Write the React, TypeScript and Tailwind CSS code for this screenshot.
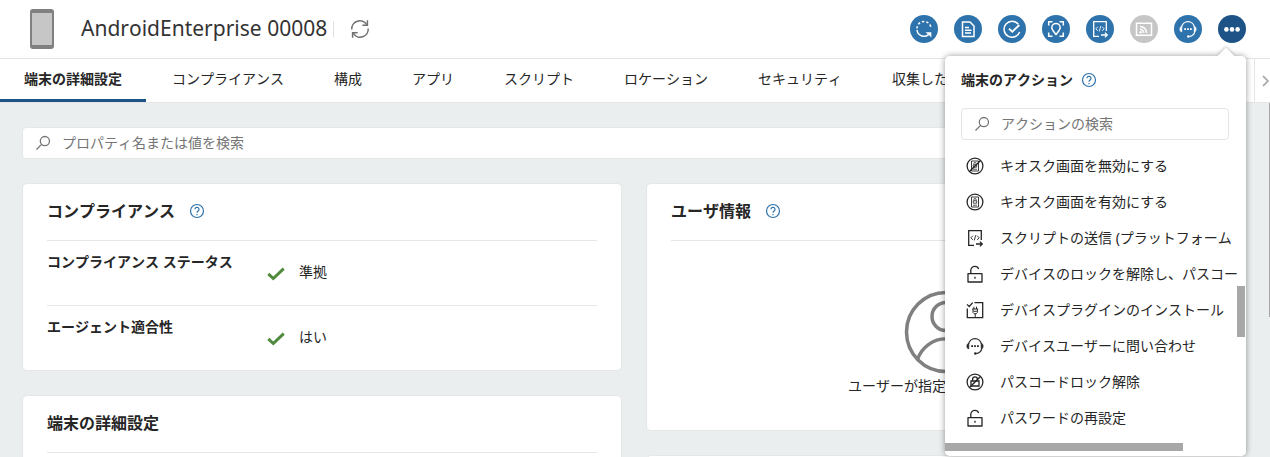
import { useState } from 'react'
import type { ReactNode } from 'react'
import clsx from 'clsx'

interface IconProps {
  className?: string
}

const tabs = ['端末の詳細設定', 'コンプライアンス', '構成', 'アプリ', 'スクリプト', 'ロケーション', 'セキュリティ', '収集した']

function RefreshIcon({ className }: IconProps) {
  return (
    <svg className={className} viewBox="0 0 20 20" fill="none" stroke="currentColor" strokeWidth="1.5">
      <path d="M1.8 10.5A8 8 0 0 1 16.6 5.6M18.2 9.5A8 8 0 0 1 3.4 14.4" />
      <path d="M17.4 1.2v5h-5M2.6 18.8v-5h5" />
    </svg>
  )
}

function SearchIcon({ className }: IconProps) {
  return (
    <svg className={className} viewBox="0 0 16 16" fill="none" stroke="currentColor" strokeWidth="1.3">
      <circle cx="9.9" cy="6.1" r="4.6" />
      <path d="M6.6 9.4 1.5 14.5" />
    </svg>
  )
}

function HelpIcon({ className }: IconProps) {
  return (
    <svg className={className} viewBox="0 0 16 16" fill="none" stroke="currentColor" strokeWidth="1.2">
      <circle cx="8" cy="8" r="6.5" />
      <path d="M6 6.3a2 2 0 1 1 3.1 1.7C8.300 8.600 8 9 8 9.700" />
      <path d="M8 10.900v1.300" />
    </svg>
  )
}

function CheckMark({ className }: IconProps) {
  return (
    <svg className={className} viewBox="0 0 18 14" fill="none" stroke="currentColor" strokeWidth="3">
      <path d="M1.300 6.800 6.300 11.500 16.700 1.600" />
    </svg>
  )
}

function SyncIcon({ className }: IconProps) {
  return (
    <svg className={className} viewBox="0 0 18 18" fill="none" stroke="currentColor" strokeWidth="1.5">
      <path d="M2 8.500A7 7 0 0 1 16 8.500" strokeDasharray="2.400 2" />
      <path d="M2 10a7 7 0 0 0 11.500 4.600" />
      <path d="M10.500 12.300h5.800v5z" fill="currentColor" stroke="none" />
    </svg>
  )
}

function DocumentIcon({ className }: IconProps) {
  return (
    <svg className={className} viewBox="0 0 18 18" fill="none" stroke="currentColor" strokeWidth="1.500">
      <path d="M3.500 2h7.500l4 4v10.500H3.500z" />
      <path d="M6 7.500h4M6 10.300h6.500M6 13h6" />
    </svg>
  )
}

function CheckCircleIcon({ className }: IconProps) {
  return (
    <svg className={className} viewBox="0 0 18 18" fill="none" stroke="currentColor" strokeWidth="1.500">
      <path d="M15.300 4.200A8 8 0 1 0 16.600 12" />
      <path d="M6 8.600l3.300 3.200 7-6.800" strokeWidth="1.900" />
    </svg>
  )
}

function LocateIcon({ className }: IconProps) {
  return (
    <svg className={className} viewBox="0 0 18 18" fill="none" stroke="currentColor" strokeWidth="1.500">
      <path d="M1.700 5.500V1.700h3.800M12.500 1.700h3.800v3.800M16.300 12.500v3.800h-3.800M5.500 16.300H1.700v-3.800" />
      <path d="M9 14.500C6.800 11.600 4.800 9.700 4.800 7.700a4.200 4.200 0 0 1 8.400 0c0 2-2 3.900-4.200 6.800z" />
    </svg>
  )
}

function ScriptIcon({ className }: IconProps) {
  return (
    <svg className={className} viewBox="0 0 18 18" fill="none" stroke="currentColor" strokeWidth="1.300">
      <path d="M8 16.300H2.700V1.700h12.600V11" />
      <path d="M6.800 6.700 4.900 8.800l1.900 2.100M11.200 6.700l1.900 2.100-1.900 2.100M9.700 6.200l-1.400 5.200" strokeWidth=".9" />
      <path d="M10 15h6M13.900 12.600l2.400 2.400-2.400 2.400" />
    </svg>
  )
}

function CastIcon({ className }: IconProps) {
  return (
    <svg className={className} viewBox="0 0 18 18" fill="none" stroke="currentColor" strokeWidth="1.500">
      <path d="M1.500 3.200h15v12h-15z" />
      <path d="M5 9.300a3.700 3.700 0 0 1 3.700 3.700M5 6.400a6.600 6.600 0 0 1 6.600 6.600" />
      <circle cx="5.700" cy="12.300" r="1.200" fill="currentColor" stroke="none" />
    </svg>
  )
}

function HeadsetIcon({ className }: IconProps) {
  return (
    <svg className={className} viewBox="0 0 18 18" fill="none" stroke="currentColor" strokeWidth="1.300">
      <path d="M2.600 7a6.500 6.500 0 0 1 12.800 0M15.800 11.500c-.5 2.700-2.500 4.600-5.500 5" />
      <path d="M2.800 6.600H2C1.200 7.300.9 8.200.9 9.200s.3 1.800 1.100 2.500h.8zM15.200 6.600h.8c.8.7 1.100 1.600 1.100 2.600s-.3 1.800-1.100 2.500h-.8z" fill="currentColor" strokeWidth=".7" />
      <path d="M5.200 9.200h1.800M8.100 9.200h1.800M11 9.200h1.800" strokeWidth="1.800" />
      <circle cx="9.300" cy="16.500" r="1.200" fill="currentColor" stroke="none" />
    </svg>
  )
}

function MoreIcon({ className }: IconProps) {
  return (
    <svg className={className} viewBox="0 0 18 18" fill="currentColor">
      <circle cx="3.400" cy="9.400" r="2.300" />
      <circle cx="9" cy="9.400" r="2.300" />
      <circle cx="14.600" cy="9.400" r="2.300" />
    </svg>
  )
}

function KioskIcon({ className }: IconProps) {
  return (
    <svg className={className} viewBox="0 0 18 18" fill="none" stroke="currentColor" strokeWidth="1.300">
      <circle cx="9" cy="9" r="7.900" />
      <path d="M5.500 4h7v10h-7z" strokeWidth=".9" />
      <path d="M7.300 7.800h3.400v2.400H7.300zM7.900 7.800V6.600a1.100 1.100 0 0 1 2.200 0v1.200M7 12.200h4" strokeWidth=".8" />
    </svg>
  )
}

function KioskOffIcon({ className }: IconProps) {
  return (
    <svg className={className} viewBox="0 0 18 18" fill="none" stroke="currentColor" strokeWidth="1.300">
      <circle cx="9" cy="9" r="7.900" />
      <path d="M5.500 4h7v10h-7z" strokeWidth=".9" />
      <path d="M7.300 7.800h3.400v2.400H7.300zM7.900 7.800V6.600a1.100 1.100 0 0 1 2.200 0M7 12.200h4" strokeWidth=".8" />
      <path d="M3.500 14.500l11-11" strokeWidth="1.500" />
    </svg>
  )
}

function UnlockIcon({ className }: IconProps) {
  return (
    <svg className={className} viewBox="0 0 18 18" fill="none" stroke="currentColor" strokeWidth="1.300">
      <path d="M2 8.700h14v8.300H2z" strokeLinejoin="round" />
      <path d="M4.800 8.700V5.500a4 4 0 0 1 4-4.100c1.900 0 3.400 1 3.900 2.600" />
      <path d="M9 11.800v2" />
    </svg>
  )
}

function PluginIcon({ className }: IconProps) {
  return (
    <svg className={className} viewBox="0 0 18 18" fill="none" stroke="currentColor" strokeWidth="1.300">
      <path d="M8.500 1.700h8.200v15H1.300V7.500" />
      <path d="M1 3.400l2.200 2.100L6.700 1.600" />
      <path d="M6.200 8h6M7 8v3.500l1.200 1.200h2l1.200-1.200V8M7.900 8V5.700M10.500 8V5.700M9.200 12.700v4M7.600 10.300h3.200" strokeWidth="1" />
    </svg>
  )
}

function PasscodeOffIcon({ className }: IconProps) {
  return (
    <svg className={className} viewBox="0 0 18 18" fill="none" stroke="currentColor" strokeWidth="1.300">
      <circle cx="9" cy="9" r="7.900" />
      <path d="M5 8h8v5H5zM6.600 8V6.300a2.400 2.400 0 0 1 4.800 0V8" />
      <path d="M3.500 14.500l11-11" strokeWidth="1.500" />
    </svg>
  )
}

const quickActions = [
  { label: '同期', icon: SyncIcon },
  { label: 'ログ', icon: DocumentIcon },
  { label: 'チェックイン', icon: CheckCircleIcon },
  { label: '位置を検索', icon: LocateIcon },
  { label: 'スクリプトの送信', icon: ScriptIcon },
  { label: 'リモート表示', icon: CastIcon, disabled: true },
  { label: '問い合わせ', icon: HeadsetIcon },
]

const menuActions = [
  { label: 'キオスク画面を無効にする', icon: KioskOffIcon },
  { label: 'キオスク画面を有効にする', icon: KioskIcon },
  { label: 'スクリプトの送信 (プラットフォーム', icon: ScriptIcon },
  { label: 'デバイスのロックを解除し、パスコー', icon: UnlockIcon },
  { label: 'デバイスプラグインのインストール', icon: PluginIcon },
  { label: 'デバイスユーザーに問い合わせ', icon: HeadsetIcon },
  { label: 'パスコードロック解除', icon: PasscodeOffIcon },
  { label: 'パスワードの再設定', icon: UnlockIcon },
]

function ActionMenu() {
  const [query, setQuery] = useState('')
  const visible = menuActions.filter(action => action.label.includes(query))

  return (
    <div className="absolute right-0 top-full z-10 mt-[13px] h-[400px] w-[301px] rounded-[5px] bg-white shadow-[0_0_6px_rgba(0,0,0,0.4)]">
      <div className="absolute -top-1.5 right-3.5 size-3 rotate-45 bg-white shadow-[-1px_-1px_3px_rgba(0,0,0,0.2)]"></div>
      <div className="relative flex h-full flex-col overflow-hidden rounded-[5px] bg-white">
        <div className="flex items-center gap-2 px-4 pt-3.5">
          <h2 className="text-sm leading-5 font-bold">端末のアクション</h2>
          <button aria-label="ヘルプ" className="text-[#2e73ac]">
            <HelpIcon className="size-4" />
          </button>
        </div>
        <label className="mr-[17px] ml-4 mt-[18px] flex h-8 shrink-0 items-center gap-[11px] rounded border border-[#e4e4e4] px-3 pb-px text-[#757575]">
          <SearchIcon className="size-4 shrink-0" />
          <input
            aria-label="アクションの検索"
            value={query}
            onChange={e => setQuery(e.target.value)}
            placeholder="アクションの検索"
            className="min-w-0 flex-1 bg-transparent text-sm leading-5 outline-none placeholder:text-[#757575]"
          />
        </label>
        <ul className="mt-2 mr-[9px] overflow-hidden">
          {visible.map(({ label, icon: Icon }) => (
            <li key={label}>
              <button className="flex h-9 w-full items-center gap-4 pl-[21px] text-left text-sm whitespace-nowrap">
                <Icon className="size-[18px] shrink-0" />
                {label}
              </button>
            </li>
          ))}
        </ul>
        {/* Scroll thumbs */}
        <div className="absolute top-[230px] right-px h-[51px] w-2 bg-[#a8a8a8]"></div>
        <div className="absolute bottom-[5px] left-0 h-2 w-[238px] bg-[#a8a8a8]"></div>
      </div>
    </div>
  )
}

function Card({ title, help, children }: { title?: string; help?: boolean; children?: ReactNode }) {
  return (
    <section className="rounded-[5px] border border-[#e4e6e7] bg-white px-6">
      {title && (
        <div className="flex h-[57px] items-center gap-3.5 border-b border-[#e6e6e6] pb-0.5">
          <h2 className="text-base leading-6 font-bold">{title}</h2>
          {help && (
            <button aria-label="ヘルプ" className="text-[#2e73ac]">
              <HelpIcon className="size-4" />
            </button>
          )}
        </div>
      )}
      {children}
    </section>
  )
}

function StatusRow({ label, value }: { label: string; value: string }) {
  return (
    <div className="flex h-[65px] border-b border-[#e6e6e6] last:h-16 last:border-b-0">
      <dt className="w-2/5 pt-[11px] text-sm leading-5 font-bold">{label}</dt>
      <dd className="flex items-center gap-3.5 pb-0.5 text-sm leading-5">
        <CheckMark className="mt-1 h-3.5 w-[18px] text-[#4f8a3d]" />
        {value}
      </dd>
    </div>
  )
}

export default function App() {
  const [activeTab, setActiveTab] = useState(tabs[0])
  const [menuOpen, setMenuOpen] = useState(true)

  return (
    <div className="flex h-screen flex-col overflow-hidden bg-[#ebeeef] font-['Noto_Sans','Noto_Sans_CJK_JP',sans-serif] text-[#262626] [font-kerning:none]">
      {/* Header */}
      <header className="flex h-[59px] shrink-0 items-center border-b border-[#e4e4e4] bg-white px-6">
        <svg className="ml-1.5 h-10 w-6 shrink-0" viewBox="0 0 24 40">
          <rect width="24" height="40" rx="3" fill="#808080" />
          <rect x="2" y="4" width="20" height="32" fill="#c6c6c6" />
        </svg>
        <h1 className="ml-[27px] pb-0.5 text-[21px] leading-7 whitespace-nowrap text-[#333333]">AndroidEnterprise 00008</h1>
        <span className="ml-1.5 h-4 w-px bg-[#e0e0e0]"></span>
        <button aria-label="更新" className="ml-4 text-[#707070]">
          <RefreshIcon className="size-5" />
        </button>
        <div className="ml-auto flex items-center gap-4">
          {quickActions.map(({ label, icon: Icon, disabled }) => (
            <button
              key={label}
              aria-label={label}
              disabled={disabled}
              className={clsx(
                'flex size-7 items-center justify-center rounded-full text-white',
                disabled ? 'bg-[#c6c6c6]' : 'bg-[#2e73ac]'
              )}
            >
              <Icon className="size-[18px]" />
            </button>
          ))}
          <div className="relative">
            <button
              aria-label="その他"
              aria-expanded={menuOpen}
              onClick={() => setMenuOpen(!menuOpen)}
              className="flex size-7 items-center justify-center rounded-full bg-[#1d5386] text-white"
            >
              <MoreIcon className="size-[18px]" />
            </button>
            {menuOpen && <ActionMenu />}
          </div>
        </div>
      </header>

      {/* Tabs */}
      <div className="flex h-11 shrink-0 border-b border-[#e4e4e4] bg-white">
        <nav className="flex min-w-0 flex-1 gap-0.5 overflow-hidden">
          {tabs.map(tab => (
            <button
              key={tab}
              onClick={() => setActiveTab(tab)}
              className={clsx(
                'shrink-0 border-b-3 px-6 text-sm leading-5',
                tab === activeTab ? 'border-[#1d5386] font-bold' : 'border-transparent'
              )}
            >
              {tab}
            </button>
          ))}
        </nav>
        <button aria-label="次のタブ" className="flex w-4 items-center justify-end border-l border-[#e4e4e4] text-[#b0b0b0]">
          <svg className="h-3 w-2" viewBox="0 0 8 12" fill="none" stroke="currentColor" strokeWidth="1.800">
            <path d="M1 1l5 5-5 5" />
          </svg>
        </button>
      </div>

      {/* Content */}
      <main className="relative min-h-0 flex-1 overflow-hidden pt-6 pr-6 pl-[22px]">
        <label className="flex h-8 items-center gap-[11px] rounded border border-[#e4e6e7] bg-white px-3 text-[#757575]">
          <SearchIcon className="size-4 shrink-0" />
          <input
            aria-label="プロパティ名または値を検索"
            placeholder="プロパティ名または値を検索"
            className="min-w-0 flex-1 bg-transparent text-sm leading-5 outline-none placeholder:text-[#757575]"
          />
        </label>

        <div className="mt-6 flex gap-6">
          <div className="flex flex-1 flex-col gap-6">
            <Card title="コンプライアンス" help>
              <dl>
                <StatusRow label="コンプライアンス ステータス" value="準拠" />
                <StatusRow label="エージェント適合性" value="はい" />
              </dl>
            </Card>
            <Card title="端末の詳細設定">
              <div className="h-16"></div>
            </Card>
          </div>
          <div className="flex flex-1 flex-col gap-6">
            <Card title="ユーザ情報" help>
              <div className="flex flex-col items-center pt-[49px] pb-[30px]">
                <svg className="size-[84px] text-[#808080]" viewBox="0 0 84 84" fill="none" stroke="currentColor" strokeWidth="3.500">
                  <circle cx="42" cy="42" r="39.500" />
                  <circle cx="42" cy="26.500" r="14" />
                  <path d="M13.500 69.500a30 30 0 0 1 57 0" />
                </svg>
                <p className="text-sm leading-6">ユーザーが指定されていません</p>
                <div className="h-0.5"></div>
              </div>
            </Card>
            <Card>
              <div className="h-16"></div>
            </Card>
          </div>
        </div>

        <div className="absolute top-0 right-0 h-[214px] w-px bg-[#a8a8a8]"></div>
      </main>
    </div>
  )
}
